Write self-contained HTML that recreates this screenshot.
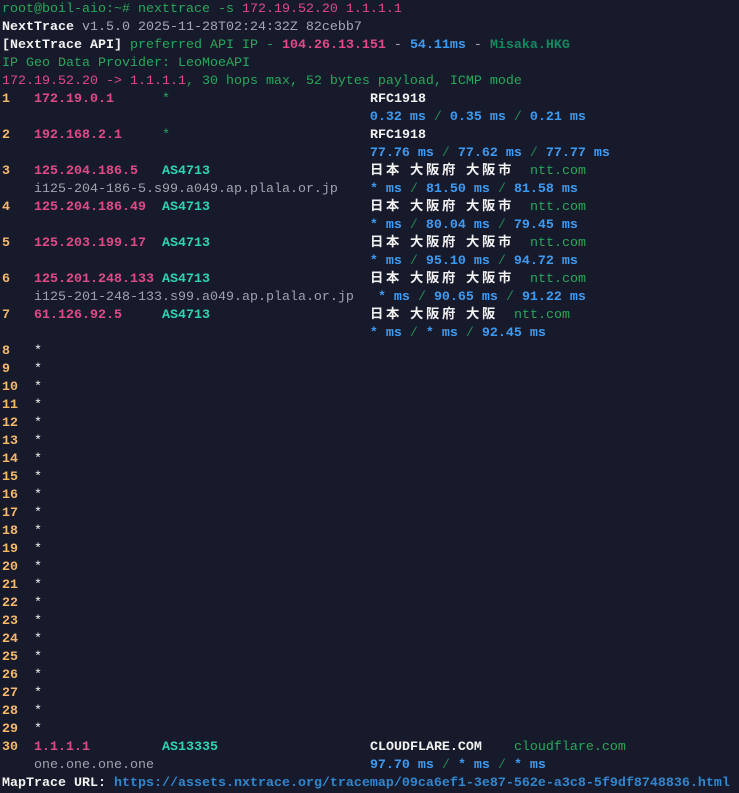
<!DOCTYPE html>
<html><head><meta charset="utf-8"><style>
html,body{margin:0;padding:0;background:#171a2b;width:739px;height:790px;overflow:hidden}
pre{margin:0;position:absolute;left:2px;top:1px;font-family:"Liberation Mono",monospace;font-size:13.33px;line-height:18px;color:#c8c8d0;white-space:pre}
.g{color:#27a85a}.p{color:#e04a86}.pb{color:#e04a86;font-weight:bold}
.w{color:#f2f2f2;font-weight:bold}.gr{color:#a8a8b4}.b{color:#3c9cf5;font-weight:bold}
.dg{color:#128a60;font-weight:bold}.o{color:#f7b86a;font-weight:bold}.t{color:#2ed3b3;font-weight:bold}
.s{color:#1d8e4c}.h{color:#a0a2ad}.ws{color:#f2f2f2}
.c{font-family:"Noto Sans CJK JP",sans-serif;font-weight:bold;color:#f2f2f2;letter-spacing:2.67px;display:inline-block;height:18px;line-height:18px;vertical-align:top;position:relative;top:-3px}
.u{color:#2f87d0;font-weight:bold}
</style></head><body><pre><span class="g">root@boil-aio:~# nexttrace -s </span><span class="p">172.19.52.20 1.1.1.1</span>
<span class="w">NextTrace</span><span class="gr"> v1.5.0 2025-11-28T02:24:32Z 82cebb7</span>
<span class="w">[NextTrace API]</span><span class="g"> preferred API IP - </span><span class="pb">104.26.13.151</span><span class="gr"> - </span><span class="b">54.11ms</span><span class="gr"> - </span><span class="dg">Misaka.HKG</span>
<span class="g">IP Geo Data Provider: LeoMoeAPI</span>
<span class="p">172.19.52.20 -&gt; 1.1.1.1</span><span class="g">, 30 hops max, 52 bytes payload, ICMP mode</span>
<span class="o">1</span>   <span class="pb">172.19.0.1</span>      <span class="g">*</span>                         <span class="w">RFC1918</span>
                                              <span class="b">0.32 ms</span> <span class="s">/</span> <span class="b">0.35 ms</span> <span class="s">/</span> <span class="b">0.21 ms</span>
<span class="o">2</span>   <span class="pb">192.168.2.1</span>     <span class="g">*</span>                         <span class="w">RFC1918</span>
                                              <span class="b">77.76 ms</span> <span class="s">/</span> <span class="b">77.62 ms</span> <span class="s">/</span> <span class="b">77.77 ms</span>
<span class="o">3</span>   <span class="pb">125.204.186.5</span>   <span class="t">AS4713</span>                    <span class="c">日本</span> <span class="c">大阪府</span> <span class="c">大阪市</span>  <span class="g">ntt.com</span>
    <span class="h">i125-204-186-5.s99.a049.ap.plala.or.jp</span>    <span class="b">* ms</span> <span class="s">/</span> <span class="b">81.50 ms</span> <span class="s">/</span> <span class="b">81.58 ms</span>
<span class="o">4</span>   <span class="pb">125.204.186.49</span>  <span class="t">AS4713</span>                    <span class="c">日本</span> <span class="c">大阪府</span> <span class="c">大阪市</span>  <span class="g">ntt.com</span>
                                              <span class="b">* ms</span> <span class="s">/</span> <span class="b">80.04 ms</span> <span class="s">/</span> <span class="b">79.45 ms</span>
<span class="o">5</span>   <span class="pb">125.203.199.17</span>  <span class="t">AS4713</span>                    <span class="c">日本</span> <span class="c">大阪府</span> <span class="c">大阪市</span>  <span class="g">ntt.com</span>
                                              <span class="b">* ms</span> <span class="s">/</span> <span class="b">95.10 ms</span> <span class="s">/</span> <span class="b">94.72 ms</span>
<span class="o">6</span>   <span class="pb">125.201.248.133</span> <span class="t">AS4713</span>                    <span class="c">日本</span> <span class="c">大阪府</span> <span class="c">大阪市</span>  <span class="g">ntt.com</span>
    <span class="h">i125-201-248-133.s99.a049.ap.plala.or.jp</span>   <span class="b">* ms</span> <span class="s">/</span> <span class="b">90.65 ms</span> <span class="s">/</span> <span class="b">91.22 ms</span>
<span class="o">7</span>   <span class="pb">61.126.92.5</span>     <span class="t">AS4713</span>                    <span class="c">日本</span> <span class="c">大阪府</span> <span class="c">大阪</span>  <span class="g">ntt.com</span>
                                              <span class="b">* ms</span> <span class="s">/</span> <span class="b">* ms</span> <span class="s">/</span> <span class="b">92.45 ms</span>
<span class="o">8</span>   <span class="ws">*</span>
<span class="o">9</span>   <span class="ws">*</span>
<span class="o">10</span>  <span class="ws">*</span>
<span class="o">11</span>  <span class="ws">*</span>
<span class="o">12</span>  <span class="ws">*</span>
<span class="o">13</span>  <span class="ws">*</span>
<span class="o">14</span>  <span class="ws">*</span>
<span class="o">15</span>  <span class="ws">*</span>
<span class="o">16</span>  <span class="ws">*</span>
<span class="o">17</span>  <span class="ws">*</span>
<span class="o">18</span>  <span class="ws">*</span>
<span class="o">19</span>  <span class="ws">*</span>
<span class="o">20</span>  <span class="ws">*</span>
<span class="o">21</span>  <span class="ws">*</span>
<span class="o">22</span>  <span class="ws">*</span>
<span class="o">23</span>  <span class="ws">*</span>
<span class="o">24</span>  <span class="ws">*</span>
<span class="o">25</span>  <span class="ws">*</span>
<span class="o">26</span>  <span class="ws">*</span>
<span class="o">27</span>  <span class="ws">*</span>
<span class="o">28</span>  <span class="ws">*</span>
<span class="o">29</span>  <span class="ws">*</span>
<span class="o">30</span>  <span class="pb">1.1.1.1</span>         <span class="t">AS13335</span>                   <span class="w">CLOUDFLARE.COM</span>    <span class="g">cloudflare.com</span>
    <span class="h">one.one.one.one</span>                           <span class="b">97.70 ms</span> <span class="s">/</span> <span class="b">* ms</span> <span class="s">/</span> <span class="b">* ms</span>
<span class="w">MapTrace URL:</span> <span class="u">https://assets.nxtrace.org/tracemap/09ca6ef1-3e87-562e-a3c8-5f9df8748836.html</span></pre></body></html>
